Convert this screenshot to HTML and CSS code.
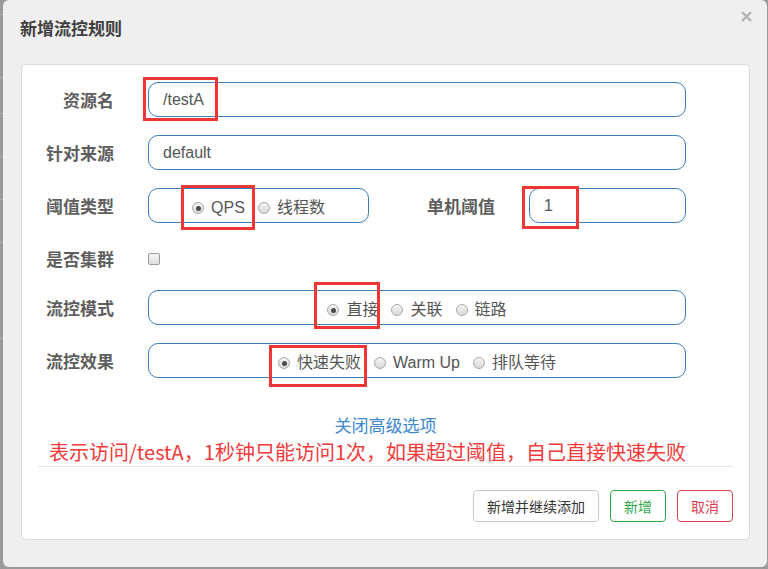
FILE: index.html
```html
<!DOCTYPE html>
<html lang="zh-CN">
<head>
<meta charset="utf-8">
<title>新增流控规则</title>
<link rel="stylesheet" href="styles.css">
</head>
<body>
<div class="modal">
  <div class="modal-header">
    <h4 class="title">新增流控规则</h4>
    <span class="close" aria-label="关闭">
      <svg width="11" height="11" viewBox="0 0 11 11"><path d="M1 1 L10 10 M10 1 L1 10" stroke="#b3b3b3" stroke-width="2.4" fill="none"/></svg>
    </span>
  </div>
  <div class="panel">
    <div class="form">
      <div class="row">
        <label class="lbl">资源名</label>
        <div class="field field-full">/testA</div>
      </div>
      <div class="row">
        <label class="lbl">针对来源</label>
        <div class="field field-full">default</div>
      </div>
      <div class="row">
        <label class="lbl">阈值类型</label>
        <div class="field field-type radios">
          <span class="opt"><span class="radio checked"></span><span class="txt">QPS</span></span>
          <span class="opt"><span class="radio"></span><span class="txt">线程数</span></span>
        </div>
        <label class="lbl lbl-2">单机阈值</label>
        <div class="field field-count">1</div>
      </div>
      <div class="row row-check">
        <label class="lbl">是否集群</label>
        <span class="checkbox"></span>
      </div>
      <div class="row">
        <label class="lbl">流控模式</label>
        <div class="field field-full radios">
          <span class="opt"><span class="radio checked"></span><span class="txt">直接</span></span>
          <span class="opt"><span class="radio"></span><span class="txt">关联</span></span>
          <span class="opt"><span class="radio"></span><span class="txt">链路</span></span>
        </div>
      </div>
      <div class="row">
        <label class="lbl">流控效果</label>
        <div class="field field-full radios">
          <span class="opt"><span class="radio checked"></span><span class="txt">快速失败</span></span>
          <span class="opt"><span class="radio"></span><span class="txt">Warm Up</span></span>
          <span class="opt"><span class="radio"></span><span class="txt">排队等待</span></span>
        </div>
      </div>
    </div>
    <div class="link">关闭高级选项</div>
    <div class="note">表示访问/testA，1秒钟只能访问1次，如果超过阈值，自己直接快速失败</div>
    <div class="divider"></div>
    <div class="footer">
      <button class="btn btn-default">新增并继续添加</button>
      <button class="btn btn-green">新增</button>
      <button class="btn btn-red">取消</button>
    </div>
  </div>
  <span class="mark mark-1"></span>
  <span class="mark mark-2"></span>
  <span class="mark mark-3"></span>
  <span class="mark mark-4"></span>
  <span class="mark mark-5"></span>
</div>
</body>
</html>
```
FILE: styles.css
```css
* { box-sizing: border-box; }
html, body { margin: 0; padding: 0; }
body {
  width: 768px;
  height: 569px;
  overflow: hidden;
  background-color: #9a9a9a;
  background-image:
    linear-gradient(to bottom,
      transparent 14px, #b0b0b0 14px, #b0b0b0 15px, transparent 15px,
      transparent 77px, #b0b0b0 77px, #b0b0b0 78px, transparent 78px,
      transparent 113px, #b0b0b0 113px, #b0b0b0 114px, transparent 114px,
      transparent 156px, #b0b0b0 156px, #b0b0b0 157px, transparent 157px,
      transparent 199px, #b0b0b0 199px, #b0b0b0 200px, transparent 200px,
      transparent 242px, #b0b0b0 242px, #b0b0b0 243px, transparent 243px,
      transparent 338px, #b0b0b0 338px, #b0b0b0 339px, transparent 339px);
  background-size: 3px 569px;
  background-repeat: no-repeat;
  font-family: "Liberation Sans", Arial, "Noto Sans CJK SC", sans-serif;
}

.modal {
  position: relative;
  margin-left: 3px;
  width: 764px;
  height: 567px;
  background: #efefef;
  border-radius: 6px;
  display: flex;
  flex-direction: column;
}

.modal-header {
  height: 64px;
  padding: 16px 0 0 17px;
  position: relative;
}
.title {
  margin: 0;
  font-size: 17px;
  line-height: 24px;
  font-weight: bold;
  color: #3f3f3f;
  font-family: "Noto Sans CJK SC", sans-serif;
}
.close {
  position: absolute;
  left: 738px;
  top: 11px;
  width: 11px;
  height: 11px;
  display: block;
}
.close svg { display: block; }

.panel {
  margin-left: 18px;
  width: 729px;
  height: 476px;
  background: #fff;
  border: 1px solid #dcdcdc;
  border-radius: 5px;
  padding-top: 17px;
}

.row {
  display: flex;
  align-items: center;
  height: 35px;
  margin-bottom: 18px;
}
.row-check { margin-bottom: 14px; }

.lbl {
  width: 92px;
  flex: none;
  text-align: right;
  margin-right: 34px;
  font-family: "Noto Sans CJK SC", sans-serif;
  font-weight: bold;
  font-size: 17px;
  color: #5e5e5e;
}
.lbl-2 {
  width: 126px;
  margin-right: 34px;
}

.field {
  height: 35px;
  border: 1px solid #3b7dbd;
  border-radius: 10px;
  padding: 0 14px;
  display: flex;
  align-items: center;
  font-size: 16px;
  color: #555;
  flex: none;
}
.field-full { width: 538px; }
.field-type { width: 221px; }
.field-count { width: 157px; }

.radios {
  justify-content: center;
  padding: 0;
}
.opt {
  display: inline-flex;
  align-items: center;
  font-size: 16px;
  color: #555;
  margin-top: 5px;
}
.opt + .opt { margin-left: 13px; }
.txt {
  display: block;
  line-height: 20px;
  height: 20px;
}

.radio {
  width: 12px;
  height: 12px;
  border-radius: 50%;
  border: 1px solid #a9a9a9;
  background: linear-gradient(#f4f4f4, #d9d9d9);
  margin-right: 7px;
  position: relative;
  flex: none;
}
.radio.checked::after {
  content: "";
  position: absolute;
  left: 2.5px;
  top: 2.5px;
  width: 5px;
  height: 5px;
  border-radius: 50%;
  background: #4a4a4a;
}

.checkbox {
  width: 12px;
  height: 12px;
  border: 1px solid #9c9c9c;
  border-radius: 2px;
  background: linear-gradient(#f6f6f6, #dedede);
  margin-top: 1px;
}

.link {
  margin-top: 35px;
  text-align: center;
  font-family: "Noto Sans CJK SC", sans-serif;
  font-size: 17px;
  line-height: 24px;
  color: #3d88cf;
}
.note {
  margin-top: 1px;
  margin-left: 27px;
  font-family: "Noto Sans CJK SC", sans-serif;
  font-size: 20px;
  line-height: 28px;
  color: #f23a3a;
  white-space: nowrap;
}
.divider {
  height: 1px;
  background: #e5e5e5;
  margin: 0 16px 0 16px;
}
.footer {
  margin-top: 23px;
  display: flex;
  justify-content: flex-end;
  padding-right: 16px;
  gap: 11px;
}
.btn {
  height: 32px;
  padding: 0 13px;
  background: #fff;
  border-radius: 4px;
  font-family: "Noto Sans CJK SC", sans-serif;
  font-size: 14px;
  line-height: 30px;
  cursor: pointer;
}
.btn-default { border: 1px solid #c8c8c8; color: #333; }
.btn-green { border: 1px solid #2ea84a; color: #2ea84a; }
.btn-red { border: 1px solid #e0404f; color: #e0404f; }

.mark {
  position: absolute;
  border: 3px solid #f03535;
  pointer-events: none;
}
.mark-1 { left: 140px; top: 77px; width: 75px; height: 44px; }
.mark-2 { left: 178px; top: 185px; width: 74px; height: 45px; }
.mark-3 { left: 519px; top: 186px; width: 57px; height: 43px; }
.mark-4 { left: 311px; top: 282px; width: 66px; height: 47px; }
.mark-5 { left: 266px; top: 345px; width: 98px; height: 42px; }
```
